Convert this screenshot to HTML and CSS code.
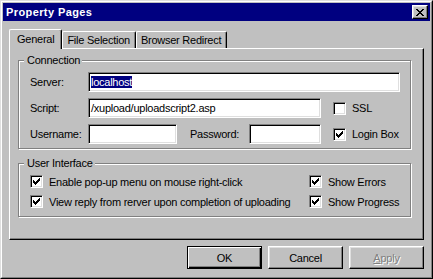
FILE: index.html
```html
<!DOCTYPE html>
<html>
<head>
    <meta charset="UTF-8">
    <title>Property Pages</title>
    <link rel="stylesheet" href="styles.css">
</head>
<body>
    <div class="window">
        <div class="frame">
            <div class="titlebar">
                <span class="title">Property Pages</span>
                <button class="close-btn">
                    <svg width="8" height="7" viewBox="0 0 8 7" shape-rendering="crispEdges">
                        <path d="M0 0h2v1h-2z M6 0h2v1h-2z M1 1h2v1h-2z M5 1h2v1h-2z M2 2h4v1h-4z M3 3h2v1h-2z M2 4h4v1h-4z M1 5h2v1h-2z M5 5h2v1h-2z M0 6h2v1h-2z M6 6h2v1h-2z" fill="#000"/>
                    </svg>
                </button>
            </div>
            <div class="content">
                <div class="tabs">
                    <div class="tab active">General</div>
                    <div class="tab">File Selection</div>
                    <div class="tab">Browser Redirect</div>
                </div>
                <div class="panel">
                    <div class="group connection">
                        <div class="legend">Connection</div>
                        <div class="row">
                            <span class="field-label">Server:</span>
                            <div class="input server"><span class="selected">localhost</span></div>
                        </div>
                        <div class="row">
                            <span class="field-label">Script:</span>
                            <div class="input script">/xupload/uploadscript2.asp</div>
                            <div class="check side"><span class="box"></span>SSL</div>
                        </div>
                        <div class="row">
                            <span class="field-label">Username:</span>
                            <div class="input user"></div>
                            <span class="pw-label">Password:</span>
                            <div class="input pw"></div>
                            <div class="check side">
                                <span class="box"><svg width="7" height="7" viewBox="0 0 7 7" shape-rendering="crispEdges"><path d="M6 0h1v1h-1z M5 1h2v1h-2z M0 2h1v1h-1z M4 2h3v1h-3z M0 3h2v1h-2z M3 3h3v1h-3z M0 4h5v1h-5z M1 5h3v1h-3z M2 6h1v1h-1z" fill="#000"/></svg></span>Login Box
                            </div>
                        </div>
                    </div>
                    <div class="group ui">
                        <div class="legend">User Interface</div>
                        <div class="check-grid">
                            <div class="check">
                                <span class="box"><svg width="7" height="7" viewBox="0 0 7 7" shape-rendering="crispEdges"><path d="M6 0h1v1h-1z M5 1h2v1h-2z M0 2h1v1h-1z M4 2h3v1h-3z M0 3h2v1h-2z M3 3h3v1h-3z M0 4h5v1h-5z M1 5h3v1h-3z M2 6h1v1h-1z" fill="#000"/></svg></span>Enable pop-up menu on mouse right-click
                            </div>
                            <div class="check">
                                <span class="box"><svg width="7" height="7" viewBox="0 0 7 7" shape-rendering="crispEdges"><path d="M6 0h1v1h-1z M5 1h2v1h-2z M0 2h1v1h-1z M4 2h3v1h-3z M0 3h2v1h-2z M3 3h3v1h-3z M0 4h5v1h-5z M1 5h3v1h-3z M2 6h1v1h-1z" fill="#000"/></svg></span>Show Errors
                            </div>
                            <div class="check">
                                <span class="box"><svg width="7" height="7" viewBox="0 0 7 7" shape-rendering="crispEdges"><path d="M6 0h1v1h-1z M5 1h2v1h-2z M0 2h1v1h-1z M4 2h3v1h-3z M0 3h2v1h-2z M3 3h3v1h-3z M0 4h5v1h-5z M1 5h3v1h-3z M2 6h1v1h-1z" fill="#000"/></svg></span>View reply from rerver upon completion of uploading
                            </div>
                            <div class="check">
                                <span class="box"><svg width="7" height="7" viewBox="0 0 7 7" shape-rendering="crispEdges"><path d="M6 0h1v1h-1z M5 1h2v1h-2z M0 2h1v1h-1z M4 2h3v1h-3z M0 3h2v1h-2z M3 3h3v1h-3z M0 4h5v1h-5z M1 5h3v1h-3z M2 6h1v1h-1z" fill="#000"/></svg></span>Show Progress
                            </div>
                        </div>
                    </div>
                </div>
                <div class="buttons">
                    <button class="btn default">OK</button>
                    <button class="btn">Cancel</button>
                    <button class="btn disabled"><u>A</u>pply</button>
                </div>
            </div>
        </div>
    </div>
</body>
</html>
```

FILE: styles.css
```css
body {
    margin: 0;
    background-color: #c0c0c0;
    font-family: "Liberation Sans", Arial, sans-serif;
    font-size: 11px;
    letter-spacing: -0.25px;
    color: #000;
}
.window {
    width: 433px;
    height: 279px;
    box-sizing: border-box;
    border: 1px solid;
    border-color: #dfdfdf #000 #000 #dfdfdf;
}
.frame {
    height: 100%;
    box-sizing: border-box;
    border: 1px solid;
    border-color: #fff #808080 #808080 #fff;
    padding: 1px;
}
.titlebar {
    height: 18px;
    background-color: #000080;
    display: flex;
    align-items: center;
    justify-content: space-between;
    padding: 0 2px 0 3px;
}
.title {
    color: #fff;
    font-weight: bold;
    font-size: 11px;
    letter-spacing: 0.4px;
}
.close-btn {
    width: 16px;
    height: 14px;
    padding: 0;
    box-sizing: border-box;
    background-color: #c0c0c0;
    border: 1px solid;
    border-color: #fff #000 #000 #fff;
    box-shadow: inset -1px -1px 0 #808080, inset 1px 1px 0 #dfdfdf;
    display: flex;
    align-items: center;
    justify-content: center;
}
.close-btn svg {
    display: block;
}
.content {
    padding: 8px 6px 0 6px;
}
.tabs {
    display: flex;
    align-items: flex-end;
    height: 19px;
}
.tab {
    height: 17px;
    box-sizing: border-box;
    display: flex;
    align-items: center;
    padding: 0 5px 0 4px;
    border-top: 1px solid #fff;
    border-left: 1px solid #fff;
    border-right: 1px solid #000;
    border-radius: 2px 2px 0 0;
    box-shadow: inset -1px 0 0 #808080;
    background-color: #c0c0c0;
}
.tab.active {
    height: 20px;
    margin-bottom: -1px;
    padding: 0 7px 1px 7px;
    position: relative;
    z-index: 1;
}
.panel {
    height: 192px;
    box-sizing: border-box;
    border: 1px solid;
    border-color: #fff #000 #000 #fff;
    box-shadow: inset -1px -1px 0 #808080;
    padding: 11px 12px 0 8px;
}
.group {
    border: 1px solid #808080;
    box-shadow: 1px 1px 0 #fff, inset 1px 1px 0 #fff;
    padding: 0 10px 4px 11px;
}
.legend {
    width: fit-content;
    height: 13px;
    line-height: 13px;
    margin: -7px 0 5px -6px;
    padding: 0 2px 0 3px;
    background-color: #c0c0c0;
}
.row {
    display: flex;
    align-items: center;
    height: 20px;
    margin-bottom: 6px;
}
.row:last-child {
    margin-bottom: 0;
}
.field-label {
    width: 58px;
}
.input {
    height: 20px;
    box-sizing: border-box;
    background-color: #fff;
    border: 1px solid;
    border-color: #808080 #fff #fff #808080;
    box-shadow: inset 1px 1px 0 #000, inset -1px -1px 0 #dfdfdf;
    padding: 0 2px;
    display: flex;
    align-items: center;
    white-space: nowrap;
}
.server {
    width: 312px;
}
.selected {
    background-color: #000080;
    color: #fff;
    line-height: 12px;
}
.script {
    width: 233px;
}
.user {
    width: 89px;
}
.pw-label {
    margin-left: 13px;
    width: 59px;
}
.pw {
    width: 72px;
}
.check {
    display: flex;
    align-items: center;
    height: 13px;
    white-space: nowrap;
}
.check.side {
    margin-left: 12px;
}
.box {
    width: 13px;
    height: 13px;
    box-sizing: border-box;
    background-color: #fff;
    border: 1px solid;
    border-color: #808080 #fff #fff #808080;
    box-shadow: inset 1px 1px 0 #000, inset -1px -1px 0 #dfdfdf;
    margin-right: 6px;
    display: flex;
    align-items: center;
    justify-content: center;
    flex-shrink: 0;
}
.box svg {
    display: block;
}
.ui {
    margin-top: 14px;
    padding-bottom: 8px;
}
.check-grid {
    display: grid;
    grid-template-columns: 279px auto;
    row-gap: 7px;
}
.buttons {
    display: flex;
    justify-content: flex-end;
    gap: 6px;
    margin-top: 6px;
}
.btn {
    width: 75px;
    height: 23px;
    box-sizing: border-box;
    padding: 0;
    background-color: #c0c0c0;
    font-family: "Liberation Sans", Arial, sans-serif;
    font-size: 11px;
    letter-spacing: -0.25px;
    color: #000;
    border: 1px solid;
    border-color: #fff #000 #000 #fff;
    box-shadow: inset -1px -1px 0 #808080, inset 1px 1px 0 #dfdfdf;
}
.btn.default {
    border-color: #000;
    box-shadow: inset 1px 1px 0 #fff, inset -1px -1px 0 #000, inset -2px -2px 0 #808080;
}
.btn.disabled {
    color: #808080;
    text-shadow: 1px 1px 0 #fff;
}
```
